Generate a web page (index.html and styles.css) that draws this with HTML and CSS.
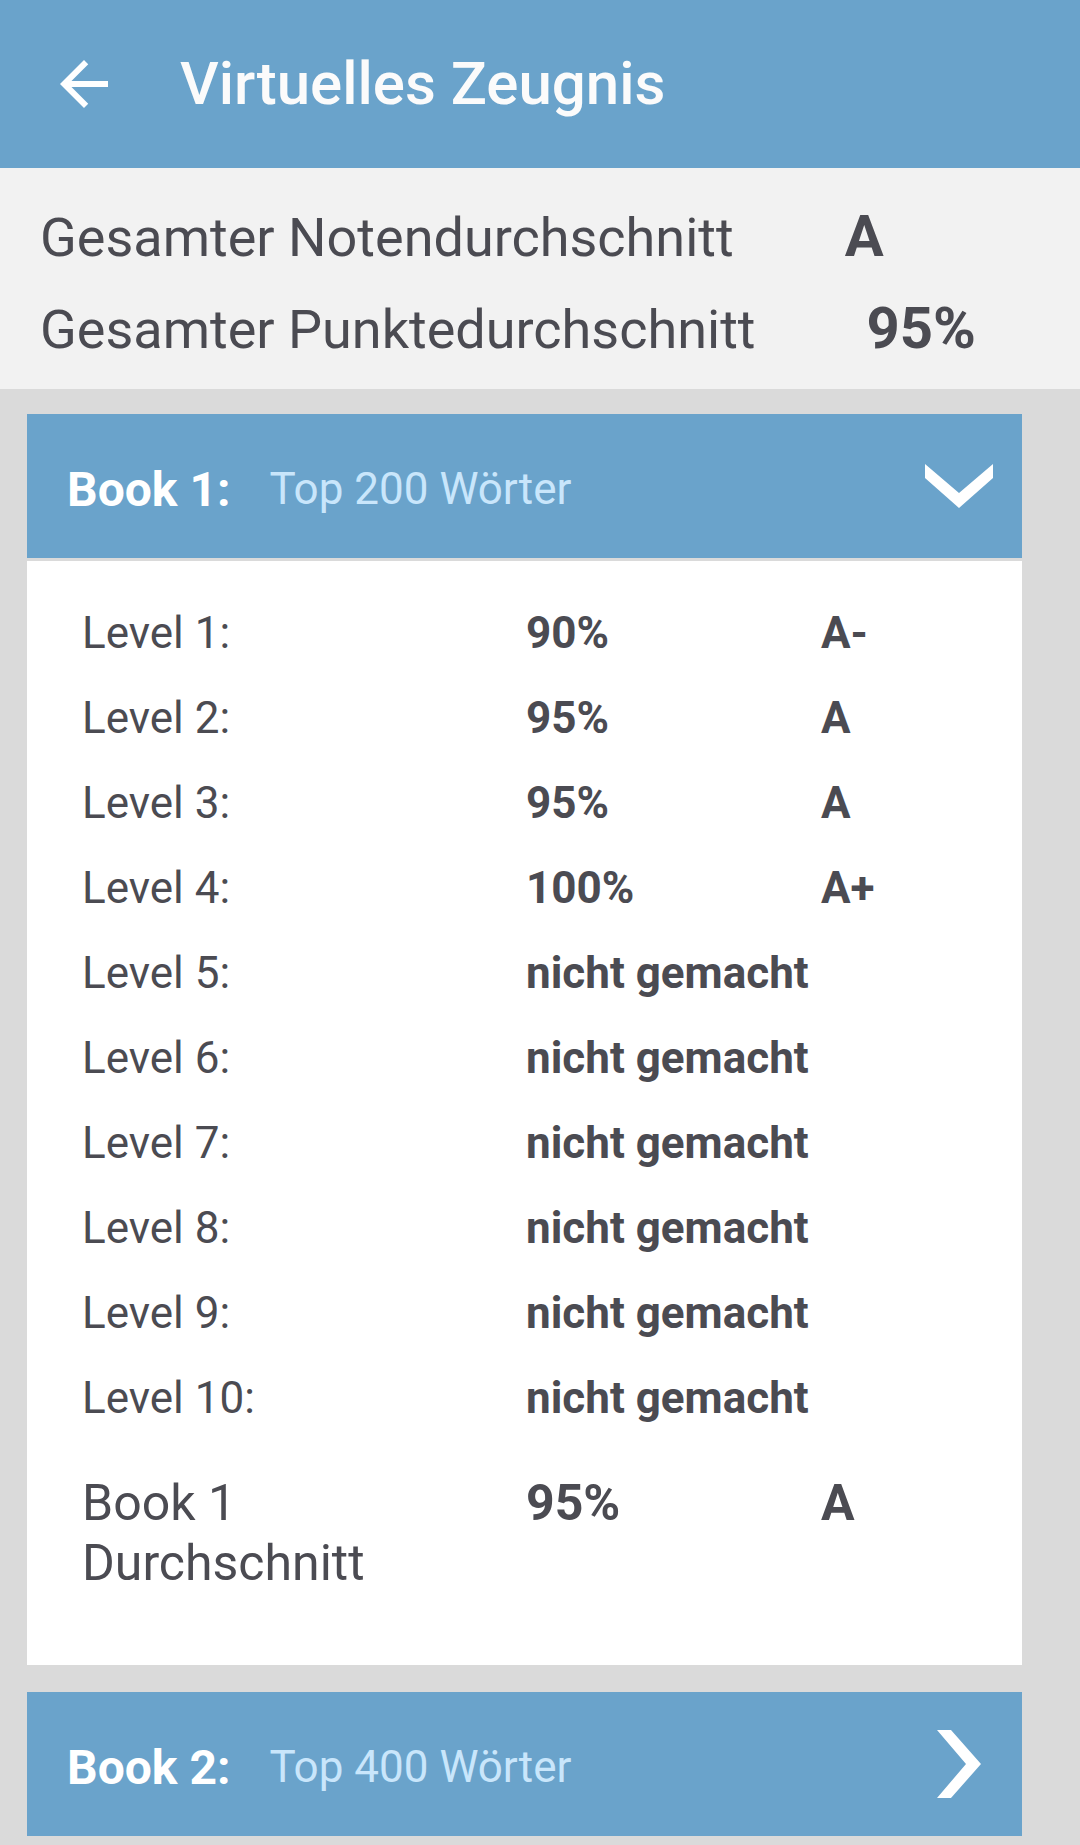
FILE: index.html
```html
<!DOCTYPE html>
<html lang="de">
<head>
<meta charset="utf-8">
<title>Virtuelles Zeugnis</title>
<link rel="stylesheet" href="styles.css">
</head>
<body>
<header class="appbar">
  <svg class="back" viewBox="0 0 24 24" width="72" height="72"><path fill="#fff" d="M20 11H7.83l5.59-5.59L12 4l-8 8 8 8 1.41-1.41L7.83 13H20v-2z"/></svg>
  <h1 class="title">Virtuelles Zeugnis</h1>
</header>
<section class="summary">
  <div class="sum-row"><span class="sum-label">Gesamter Notendurchschnitt</span><span class="sum-value">A</span></div>
  <div class="sum-row"><span class="sum-label">Gesamter Punktedurchschnitt</span><span class="sum-value">95%</span></div>
</section>
<section class="card">
  <div class="card-head">
    <span class="book">Book 1:</span><span class="book-sub">Top 200 Wörter</span>
    <svg class="chev-down" viewBox="0 0 68 44" width="68" height="44"><polygon fill="#fff" points="0,0 34,29 68,0 68,14 34,44 0,14"/></svg>
  </div>
  <div class="card-body">
    <div class="grid">
      <span class="lbl">Level 1:</span><span class="val">90%</span><span class="val">A-</span>
      <span class="lbl">Level 2:</span><span class="val">95%</span><span class="val">A</span>
      <span class="lbl">Level 3:</span><span class="val">95%</span><span class="val">A</span>
      <span class="lbl">Level 4:</span><span class="val">100%</span><span class="val">A+</span>
      <span class="lbl">Level 5:</span><span class="val">nicht gemacht</span><span class="val"></span>
      <span class="lbl">Level 6:</span><span class="val">nicht gemacht</span><span class="val"></span>
      <span class="lbl">Level 7:</span><span class="val">nicht gemacht</span><span class="val"></span>
      <span class="lbl">Level 8:</span><span class="val">nicht gemacht</span><span class="val"></span>
      <span class="lbl">Level 9:</span><span class="val">nicht gemacht</span><span class="val"></span>
      <span class="lbl">Level 10:</span><span class="val">nicht gemacht</span><span class="val"></span>
    </div>
    <div class="grid avg">
      <span class="lbl">Book 1<br>Durchschnitt</span><span class="val">95%</span><span class="val">A</span>
    </div>
  </div>
</section>
<section class="card second">
  <div class="card-head">
    <span class="book">Book 2:</span><span class="book-sub">Top 400 Wörter</span>
    <svg class="chev-right" viewBox="0 0 44 68" width="44" height="68"><polygon fill="#fff" points="0,0 14,0 44,34 14,68 0,68 29,34"/></svg>
  </div>
</section>
</body>
</html>
```
FILE: styles.css
```css
html, body {
  margin: 0;
  padding: 0;
}
body {
  background: #dadada;
  font-family: Roboto, "Noto Sans", sans-serif;
  color: #4b4b52;
  width: 1080px;
  min-height: 1845px;
}
.appbar {
  height: 168px;
  background: #6aa3cb;
  display: flex;
  align-items: center;
  padding-left: 48px;
  box-sizing: border-box;
}
.back {
  display: block;
  flex: none;
}
.title {
  margin: 0 0 0 60px;
  font-size: 60px;
  font-weight: 500;
  color: #fbfbfb;
  line-height: 1;
}
.summary {
  background: #f2f2f2;
  padding: 22px 0 15px 40px;
}
.sum-row {
  display: flex;
  align-items: baseline;
  height: 92px;
  line-height: 92px;
}
.sum-label {
  font-size: 54px;
}
.sum-value {
  font-size: 58px;
  font-weight: 700;
  margin-left: 111px;
}
.card {
  margin: 25px 0 0 27px;
  width: 995px;
}
.card.second {
  margin-top: 27px;
}
.card-head {
  height: 144px;
  background: #6aa3cb;
  display: flex;
  align-items: center;
  padding: 0 29px 0 40px;
  box-sizing: border-box;
}
.book, .book-sub {
  position: relative;
  top: 3px;
}
.book {
  font-size: 48px;
  font-weight: 700;
  color: #ffffff;
}
.book-sub {
  font-size: 44px;
  color: #c9e6fb;
  margin-left: 39px;
}
.chev-down, .chev-right {
  display: block;
  margin-left: auto;
}
.chev-right {
  margin-right: 12px;
}
.card-body {
  background: #ffffff;
  margin-top: 3px;
  padding: 30px 0 72px 55px;
}
.grid {
  display: grid;
  grid-template-columns: 444px 295px 1fr;
  grid-auto-rows: 85px;
  align-items: center;
  font-size: 44px;
  line-height: 85px;
}
.val {
  font-weight: 700;
  white-space: nowrap;
}
.grid.avg {
  margin-top: 32px;
  grid-auto-rows: auto;
  align-items: start;
  font-size: 50px;
  line-height: 60px;
}
```
